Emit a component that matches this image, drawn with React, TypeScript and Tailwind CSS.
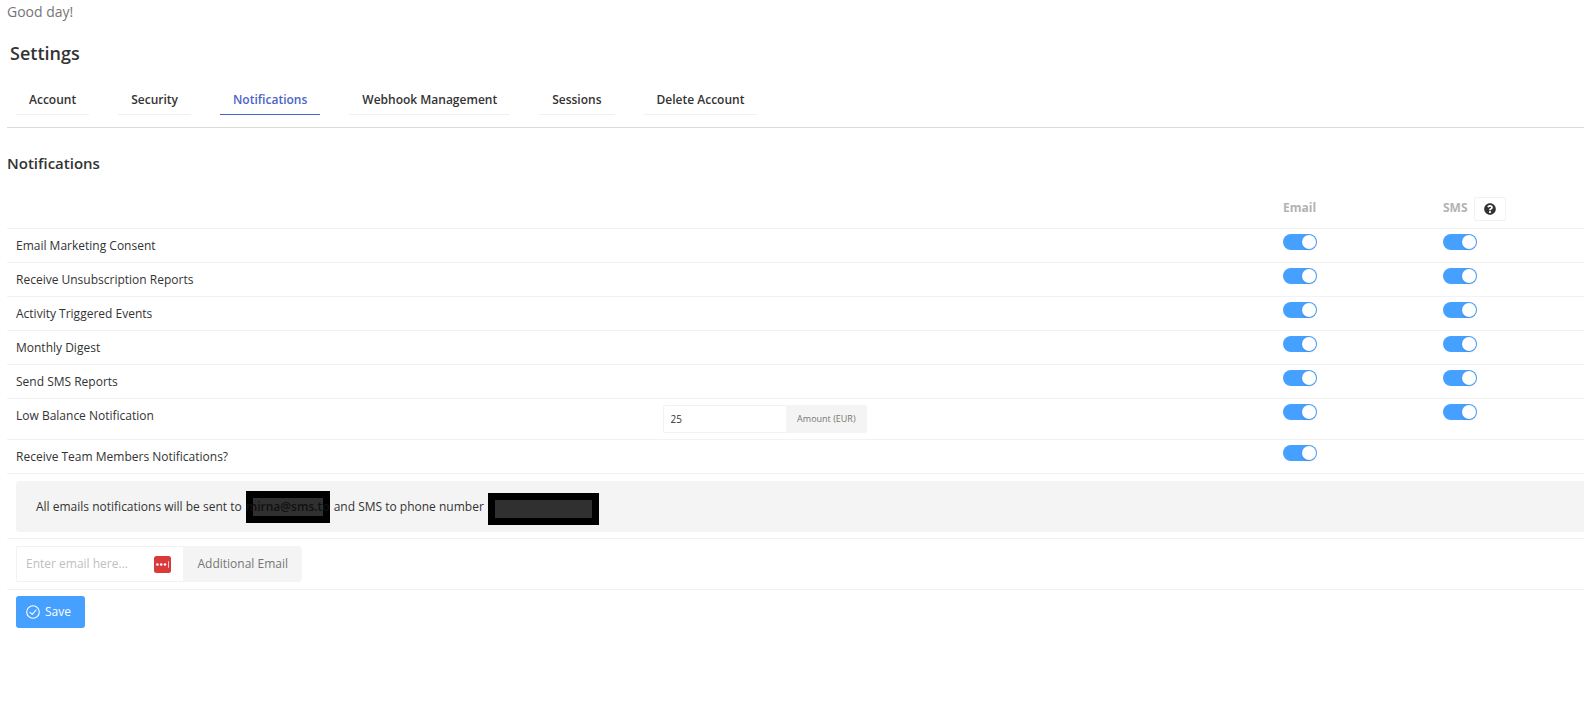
import { useState } from "react";
import clsx from "clsx";
import { FaQuestionCircle } from "react-icons/fa";

type Channel = "email" | "sms";

interface NotificationRow {
  id: string;
  label: string;
  channels: Channel[];
  hasAmount?: boolean;
}

const tabs = [
  "Account",
  "Security",
  "Notifications",
  "Webhook Management",
  "Sessions",
  "Delete Account",
];

const rows: NotificationRow[] = [
  { id: "marketing", label: "Email Marketing Consent", channels: ["email", "sms"] },
  { id: "unsubscription", label: "Receive Unsubscription Reports", channels: ["email", "sms"] },
  { id: "activity", label: "Activity Triggered Events", channels: ["email", "sms"] },
  { id: "digest", label: "Monthly Digest", channels: ["email", "sms"] },
  { id: "reports", label: "Send SMS Reports", channels: ["email", "sms"] },
  { id: "balance", label: "Low Balance Notification", channels: ["email", "sms"], hasAmount: true },
  { id: "team", label: "Receive Team Members Notifications?", channels: ["email"] },
];

function Toggle({ label }: { label: string }) {
  const [checked, setChecked] = useState(true);

  return (
    <input
      type="checkbox"
      role="switch"
      aria-label={label}
      checked={checked}
      onChange={(e) => setChecked(e.target.checked)}
      className="flex h-4 w-[34px] cursor-pointer appearance-none items-center rounded-full bg-gray-300 px-px before:size-3.5 before:rounded-full before:bg-white before:shadow-sm checked:justify-end checked:bg-[#46a0ff]"
    />
  );
}

function SaveIcon() {
  return (
    <svg viewBox="0 0 14 14" className="size-3.5" fill="none" stroke="currentColor" strokeWidth="1.1" strokeLinecap="round" strokeLinejoin="round">
      <circle cx="7" cy="7" r="6.3" />
      <path d="M4 7.3 6.2 9.3 10.1 5" />
    </svg>
  );
}

// Password manager badge shown inside the email field
function PasswordBadge() {
  return (
    <svg viewBox="0 0 17 17" className="size-[17px] shrink-0" aria-hidden="true">
      <rect width="17" height="17" rx="2.5" fill="#d93b3b" />
      <circle cx="3.4" cy="8.5" r="1.3" fill="#fff" />
      <circle cx="7.2" cy="8.5" r="1.3" fill="#fff" />
      <circle cx="11" cy="8.5" r="1.3" fill="#fff" />
      <rect x="14" y="5.2" width="1" height="6.6" fill="#f6c9c9" />
    </svg>
  );
}

export default function App() {
  const [activeTab, setActiveTab] = useState("Notifications");
  const [amount, setAmount] = useState("25");
  const [email, setEmail] = useState("");

  return (
    <div className="min-h-screen overflow-x-hidden bg-white pl-[7px] font-['Open_Sans',sans-serif] text-xs leading-5 text-[#333]">
      <p className="pt-0.5 text-sm leading-5 text-[#767676]">Good day!</p>

      <h1 className="mt-[19px] pl-[3px] text-lg leading-6 font-semibold">Settings</h1>

      <nav className="flex gap-[29px] border-b border-[#dcdcdc] pt-5 pb-3 pl-[9px] leading-5">
        {tabs.map((tab) => (
          <button
            key={tab}
            type="button"
            onClick={() => setActiveTab(tab)}
            className={clsx(
              "cursor-pointer border-b px-[13px] pt-[5px] pb-1 font-semibold",
              tab === activeTab ? "border-[#4a63c8] text-[#4a63c8]" : "border-[#f0f0f0]"
            )}
          >
            {tab}
          </button>
        ))}
      </nav>

      <h2 className="mt-[23px] text-[15px] leading-6 font-semibold">Notifications</h2>

      <table className="mt-[15px] w-full table-fixed border-collapse text-left">
        <thead>
          <tr className="border-b border-[#f2f2f2] align-top">
            <th className="w-[41%]" aria-label="Notification"></th>
            <th aria-label="Amount"></th>
            <th className="w-40 px-[9px] py-[7px] font-bold text-[#b3b3b3]">
              <div className="flex h-6 items-center pb-0.5">Email</div>
            </th>
            <th className="w-[150px] px-[9px] py-[7px] font-bold text-[#b3b3b3]">
              <div className="flex h-6 gap-1.5">
                <span className="flex items-center pb-0.5">SMS</span>
                <button
                  type="button"
                  aria-label="About SMS notifications"
                  className="flex h-6 w-8 cursor-pointer items-center justify-center rounded-xs border border-[#f2f2f2] text-[#333]"
                >
                  <FaQuestionCircle className="size-3" />
                </button>
              </div>
            </th>
          </tr>
        </thead>
        <tbody>
          {rows.map((row) => (
            <tr key={row.id} className="border-b border-[#f2f2f2] align-top">
              <td className="px-[9px] pt-[7px] pb-1.5">{row.label}</td>
              <td className="px-[9px]">
                {row.hasAmount && (
                  <div className="flex w-51 py-1.5">
                    <input
                      type="text"
                      id="amount"
                      value={amount}
                      onChange={(e) => setAmount(e.target.value)}
                      className="h-7 min-w-0 flex-1 rounded-l-xs border border-r-0 border-[#f2f2f2] px-[7px] text-[10px] outline-none"
                    />
                    <label
                      htmlFor="amount"
                      className="flex items-center rounded-r-xs bg-[#f4f4f4] px-[11px] text-[9px] text-[#767676]"
                    >
                      Amount (EUR)
                    </label>
                  </div>
                )}
              </td>
              <td className="px-[9px] pt-[5px]">
                {row.channels.includes("email") && <Toggle label={`${row.label} by email`} />}
              </td>
              <td className="px-[9px] pt-[5px]">
                {row.channels.includes("sms") && <Toggle label={`${row.label} by SMS`} />}
              </td>
            </tr>
          ))}
          <tr className="border-b border-[#f2f2f2]">
            <td colSpan={4} className="pt-[7px] pb-1.5 pl-[9px]">
              <div className="flex h-[51px] items-center gap-1 rounded-l-sm bg-[#f4f4f4] pt-px pl-5">
                <span>All emails notifications will be sent to</span>
                <span className="flex h-8 w-[84px] items-center justify-center border-7 border-black bg-[#303030] font-semibold whitespace-nowrap text-[#111]">
                  mirna@sms.to
                </span>
                <span>and SMS to phone number</span>
                <span className="mt-1 h-8 w-[111px] border-7 border-black bg-[#303030]"></span>
              </div>
            </td>
          </tr>
          <tr className="border-b border-[#f2f2f2]">
            <td colSpan={4} className="px-[9px] py-[7px]">
              <div className="flex w-[286px]">
                <div className="flex h-9 min-w-0 flex-1 items-center rounded-l-xs border border-r-0 border-[#f2f2f2] pr-3 pl-[9px]">
                  <input
                    type="email"
                    id="additional-email"
                    value={email}
                    onChange={(e) => setEmail(e.target.value)}
                    placeholder="Enter email here..."
                    className="min-w-0 flex-1 outline-none placeholder:text-[#c0c0c0]"
                  />
                  <PasswordBadge />
                </div>
                <label
                  htmlFor="additional-email"
                  className="flex items-center rounded-r-sm bg-[#f4f4f4] px-3.5 text-[#767676]"
                >
                  Additional Email
                </label>
              </div>
            </td>
          </tr>
        </tbody>
      </table>

      <button
        type="button"
        className="mt-1.5 ml-[9px] flex h-8 cursor-pointer items-center gap-[5px] rounded-[3px] bg-[#46a0ff] pr-3.5 pl-2.5 text-white"
      >
        <SaveIcon />
        Save
      </button>
    </div>
  );
}
